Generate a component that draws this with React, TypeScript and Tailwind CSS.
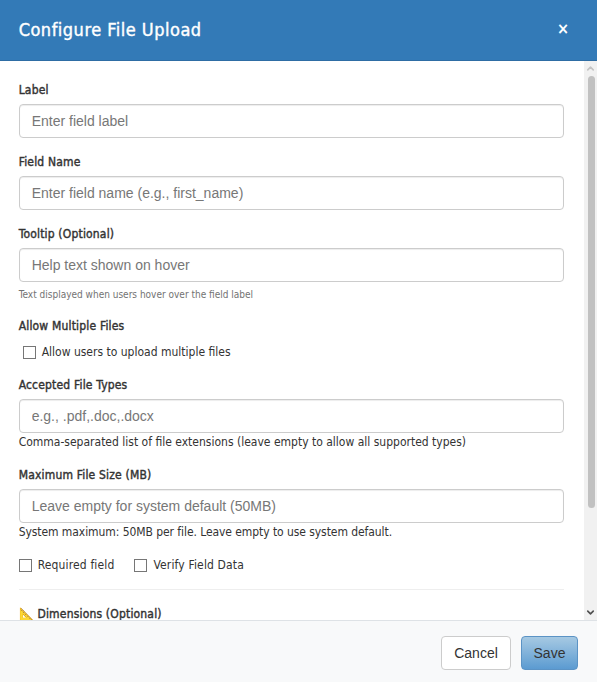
import { ChevronDown, ChevronUp } from "lucide-react";

const labelText = "text-[12px] leading-[17px] tracking-[0.18px] [-webkit-text-stroke:0.4px_#333] text-[#333]";

const Field = ({ label, placeholder }: { label: string; placeholder: string }) => (
  <div>
    <label className={"block h-[17px] mb-[5px] " + labelText}>{label}</label>
    <input
      placeholder={placeholder}
      className="block w-[545px] h-[34px] px-3 bg-white border border-[#ccc] rounded-[4px] text-[14px] font-['Liberation_Sans',sans-serif] placeholder:text-[#777] shadow-[inset_0_1px_1px_rgba(0,0,0,0.075)]"
    />
  </div>
);

const Check = ({ label, className }: { label: string; className?: string }) => (
  <label className={"flex items-center text-[12px] leading-[17px] text-[#333] " + (className ?? "")}>
    <span className="w-[13px] h-[13px] border border-[#767676] bg-white shrink-0" />
    <span className="ml-[6px]">{label}</span>
  </label>
);

export default function App() {
  return (
    <div className="w-[597px] h-[682px] flex flex-col bg-white overflow-hidden font-['DejaVu_Sans_Condensed','DejaVu_Sans',sans-serif]">
      <div className="h-[61px] shrink-0 flex items-center justify-between pl-[18.67px] pr-[28px] pb-[2px] bg-[#337ab7] border-b border-[#2e6da4]">
        <h4 className="text-[18px] tracking-[0.5px] [-webkit-text-stroke:0.4px_white] text-white">Configure File Upload</h4>
        <span className="text-[16px] font-bold text-white leading-none">×</span>
      </div>

      <div className="flex-1 min-h-0 flex">
        <div className="flex-1 min-w-0 overflow-hidden pl-[18.67px] pt-[21px]">
          <div className="flex flex-col gap-[16px]">
            <Field label="Label" placeholder="Enter field label" />
            <Field label="Field Name" placeholder="Enter field name (e.g., first_name)" />
            <div>
              <Field label="Tooltip (Optional)" placeholder="Help text shown on hover" />
              <p className="mt-[6px] text-[10px] leading-[14px] text-[#737373]">Text displayed when users hover over the field label</p>
            </div>
            <div>
              <p className={"h-[17px] " + labelText}>Allow Multiple Files</p>
              <Check label="Allow users to upload multiple files" className="mt-[9px] ml-[4px]" />
            </div>
            <div>
              <Field label="Accepted File Types" placeholder="e.g., .pdf,.doc,.docx" />
              <p className="mt-px text-[12px] leading-[17px] text-[#333]">Comma-separated list of file extensions (leave empty to allow all supported types)</p>
            </div>
            <div>
              <Field label="Maximum File Size (MB)" placeholder="Leave empty for system default (50MB)" />
              <p className="mt-px text-[12px] tracking-[-0.07px] leading-[17px] text-[#333]">System maximum: 50MB per file. Leave empty to use system default.</p>
            </div>
            <div className="flex items-center gap-[20px]">
              <Check label="Required field" className="tracking-[0.15px]" />
              <Check label="Verify Field Data" className="tracking-[0.15px]" />
            </div>
          </div>
          <div className="w-[545px] mt-[15px] pt-[16px] border-t border-[#eee]">
            <p className={labelText}>📐 Dimensions (Optional)</p>
          </div>
        </div>

        {/* scrollbar */}
        <div className="w-[13px] shrink-0 flex flex-col items-center bg-[#f1f1f1] pt-[2px] pb-[2px]">
          <ChevronUp className="w-[11px] h-[11px] text-[#c4c4c4] shrink-0" strokeWidth={3.5} />
          <div className="mt-[2px] w-[7px] h-[432px] ml-px rounded-[4px] bg-[#c1c1c1] shrink-0" />
          <div className="flex-1" />
          <ChevronDown className="w-[11px] h-[11px] text-[#505050] shrink-0" strokeWidth={3.5} />
        </div>
      </div>

      <div className="h-[62px] shrink-0 flex items-center justify-end gap-[10px] pr-[19px] pt-[2px] bg-[#f8f9fa] border-t border-[#dee2e6] font-['Liberation_Sans',sans-serif]">
        <button className="h-[34px] w-[70px] pt-px text-[14px] text-[#333] bg-white border border-[#ccc] rounded-[4px]">Cancel</button>
        <button className="h-[34px] w-[57px] pt-px text-[14px] text-[#333] bg-linear-to-b from-[#a6c9e2] to-[#5b9bd1] border border-[#5b93c5] rounded-[4px]">Save</button>
      </div>
    </div>
  );
}
